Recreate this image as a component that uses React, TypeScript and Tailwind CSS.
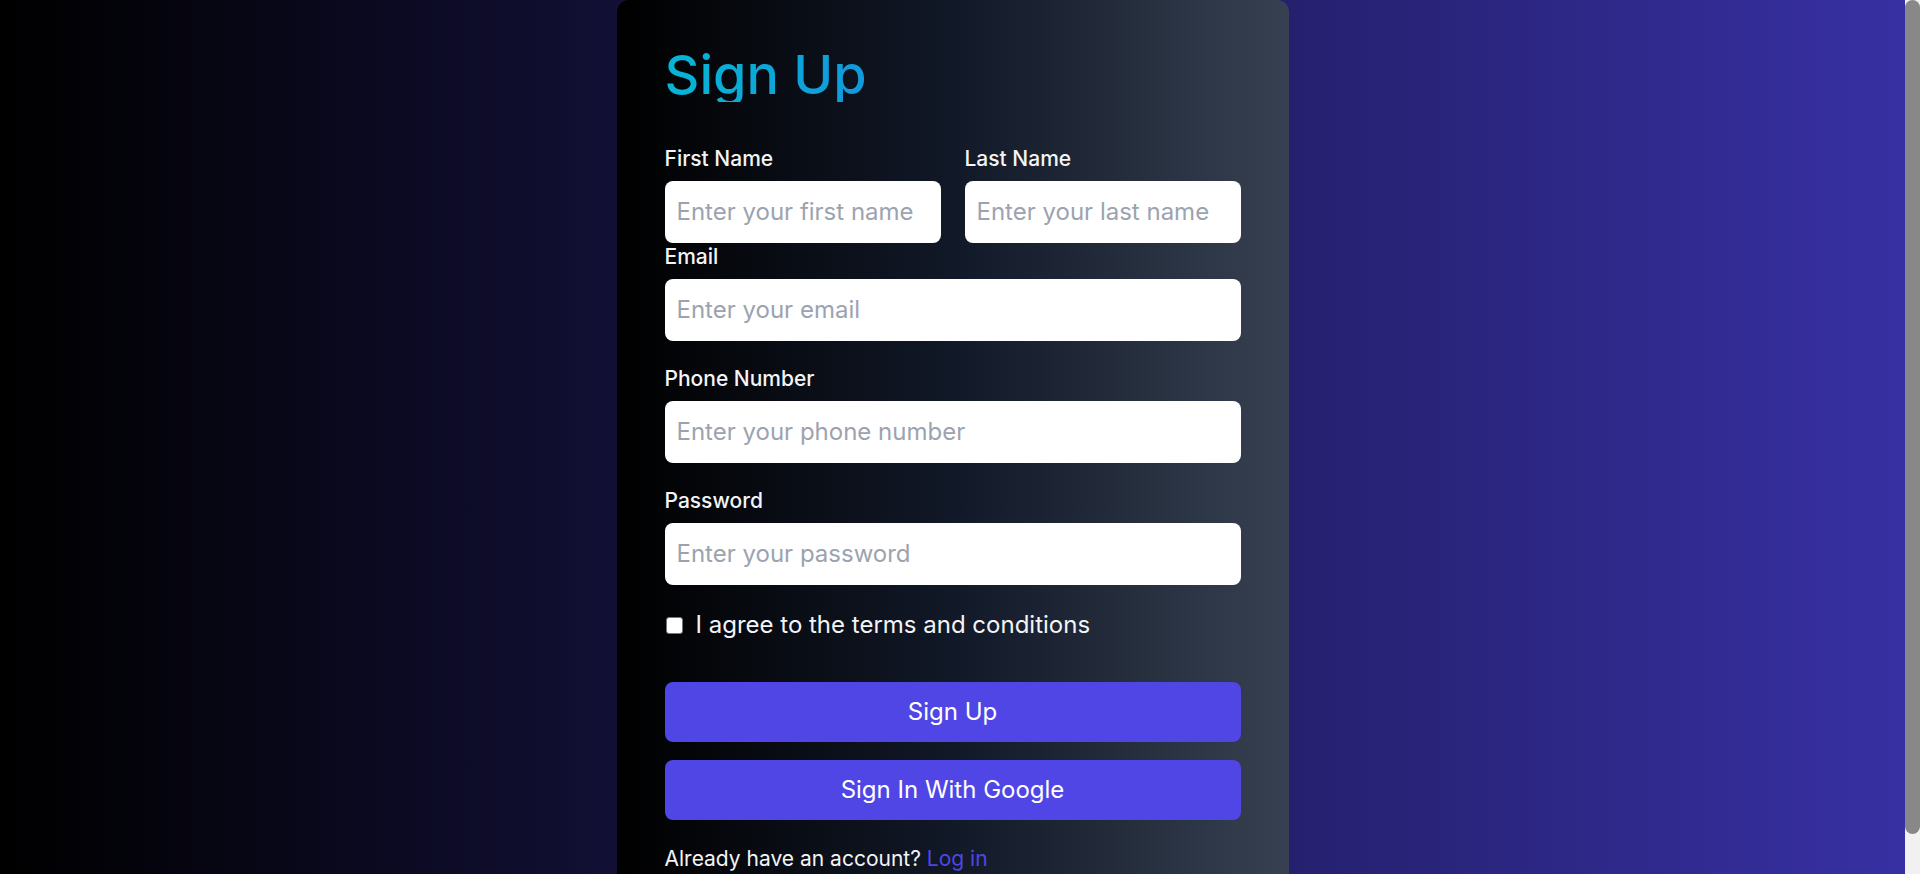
import { useState } from 'react'

const inputClass =
  'w-full rounded-lg bg-white px-3 py-[15px] text-[24px] leading-8 text-gray-900 placeholder-[#9ca3af] outline-none'
const labelClass = 'block text-[21px] leading-7 font-medium text-gray-100 mb-2'

export default function App() {
  const [agree, setAgree] = useState(false)

  return (
    <div className="flex min-h-screen w-full" style={{ fontFamily: 'Inter, "Noto Sans", sans-serif' }}>
      <div className="flex-1 flex justify-center bg-linear-to-r/srgb from-black to-[#3730a3]">
        <div className="w-[672px] rounded-xl bg-linear-to-r/srgb from-black via-[#111827] to-[#374151] p-12">
          <h1 className="text-[54px] leading-none font-medium mb-[43px] bg-linear-to-r/srgb from-[#06b6d4] to-[#2563eb] bg-clip-text text-transparent">
            Sign Up
          </h1>

          <form onSubmit={(e) => e.preventDefault()}>
            <div className="grid grid-cols-2 gap-6">
              <div>
                <label className={labelClass}>First Name</label>
                <input type="text" placeholder="Enter your first name" className={inputClass} />
              </div>
              <div>
                <label className={labelClass}>Last Name</label>
                <input type="text" placeholder="Enter your last name" className={inputClass} />
              </div>
            </div>

            <div className="mb-6">
              <label className={labelClass}>Email</label>
              <input type="email" placeholder="Enter your email" className={inputClass} />
            </div>

            <div className="mb-6">
              <label className={labelClass}>Phone Number</label>
              <input type="tel" placeholder="Enter your phone number" className={inputClass} />
            </div>

            <div className="mb-6">
              <label className={labelClass}>Password</label>
              <input type="password" placeholder="Enter your password" className={inputClass} />
            </div>

            <label className="flex items-center h-8 mt-px text-[24px] text-gray-100">
              <input
                type="checkbox"
                checked={agree}
                onChange={(e) => setAgree(e.target.checked)}
                className="appearance-none w-[17px] h-[17px] ml-px mr-[13px] rounded-[3px] border border-[#767676] bg-white checked:bg-[#4f46e5]"
              />
              I agree to the terms and conditions
            </label>

            <button
              type="submit"
              className="mt-[41px] w-full rounded-lg bg-[#4f46e5] py-[14px] text-[24px] leading-8 text-white"
            >
              Sign Up
            </button>
            <button
              type="button"
              className="mt-[18px] w-full rounded-lg bg-[#4f46e5] py-[14px] text-[24px] leading-8 text-white"
            >
              Sign In With Google
            </button>
          </form>

          <p className="mt-6 text-[21px] leading-[30px] text-gray-100">
            Already have an account?{' '}
            <a href="#" className="text-[#4f46e5]">
              Log in
            </a>
          </p>
        </div>
      </div>

      {/* scrollbar strip */}
      <div className="w-[15px] shrink-0 bg-[#f1f1f1]">
        <div className="h-[834px] w-full rounded-full bg-[#888888]" />
      </div>
    </div>
  )
}
